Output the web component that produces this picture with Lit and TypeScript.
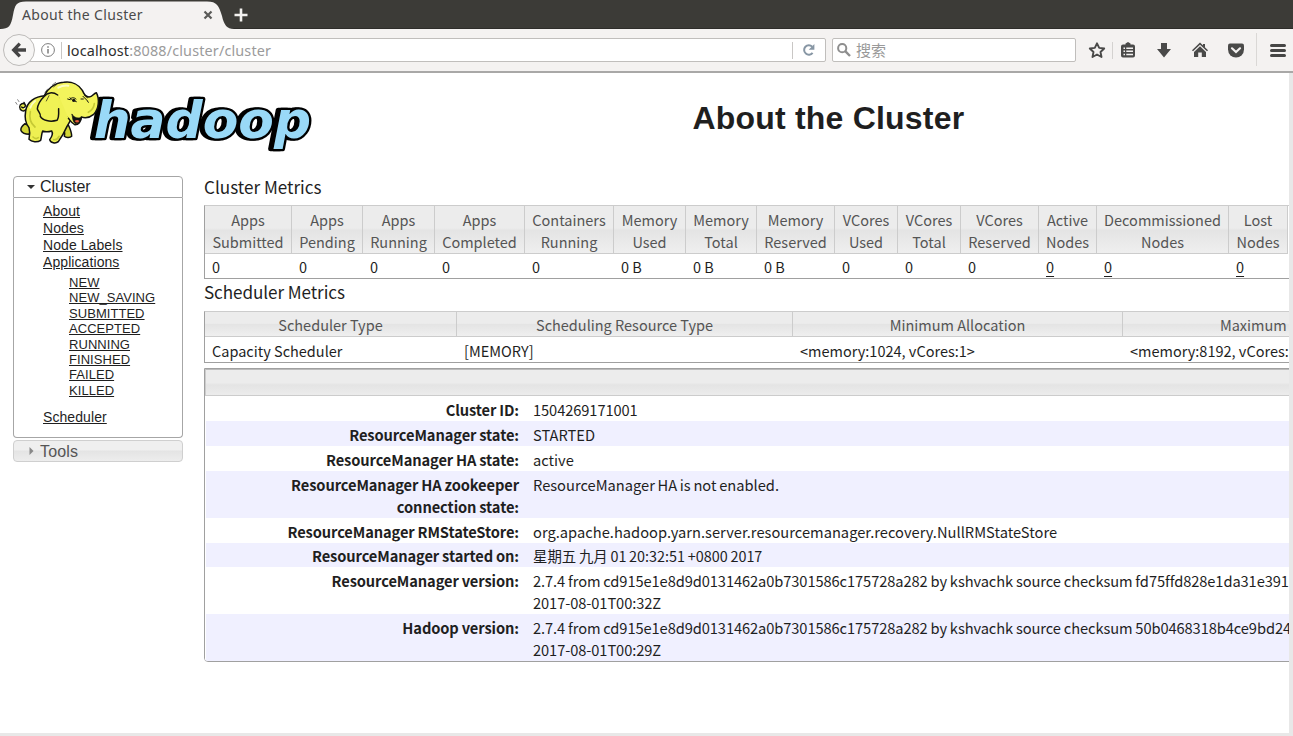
import { LitElement, html, css, svg } from "lit";
import { customElement } from "lit/decorators.js";

const METRICS: [string, string, string, boolean][] = [
  ["Apps", "Submitted", "0", false],
  ["Apps", "Pending", "0", false],
  ["Apps", "Running", "0", false],
  ["Apps", "Completed", "0", false],
  ["Containers", "Running", "0", false],
  ["Memory", "Used", "0 B", false],
  ["Memory", "Total", "0 B", false],
  ["Memory", "Reserved", "0 B", false],
  ["VCores", "Used", "0", false],
  ["VCores", "Total", "0", false],
  ["VCores", "Reserved", "0", false],
  ["Active", "Nodes", "0", true],
  ["Decommissioned", "Nodes", "0", true],
  ["Lost", "Nodes", "0", true],
];

const SCHEDULER: [string, string][] = [
  ["Scheduler Type", "Capacity Scheduler"],
  ["Scheduling Resource Type", "[MEMORY]"],
  ["Minimum Allocation", "<memory:1024, vCores:1>"],
  ["Maximum Allocation", "<memory:8192, vCores:8>"],
];

const INFO: [string[], string[], string][] = [
  [["Cluster ID:"], ["1504269171001"], "hex"],
  [["ResourceManager state:"], ["STARTED"], ""],
  [["ResourceManager HA state:"], ["active"], ""],
  [["ResourceManager HA zookeeper", "connection state:"], ["ResourceManager HA is not enabled."], "tall"],
  [["ResourceManager RMStateStore:"], ["org.apache.hadoop.yarn.server.resourcemanager.recovery.NullRMStateStore"], "path"],
  [["ResourceManager started on:"], ["星期五 九月 01 20:32:51 +0800 2017"], "short"],
  [
    ["ResourceManager version:"],
    ["2.7.4 from cd915e1e8d9d0131462a0b7301586c175728a282 by kshvachk source checksum fd75ffd828e1da31e391", "2017-08-01T00:32Z"],
    "tall hex",
  ],
  [
    ["Hadoop version:"],
    ["2.7.4 from cd915e1e8d9d0131462a0b7301586c175728a282 by kshvachk source checksum 50b0468318b4ce9bd24", "2017-08-01T00:29Z"],
    "tall hex",
  ],
];

const STATES = ["NEW", "NEW_SAVING", "SUBMITTED", "ACCEPTED", "RUNNING", "FINISHED", "FAILED", "KILLED"];

@customElement("browser-chrome")
export class BrowserChrome extends LitElement {
  static styles = css`
    :host { display: block; height: 73px; font-family: "Noto Sans", "Noto Sans CJK SC", sans-serif; }
    svg { display: block; flex: none; }
    .strip { height: 29px; background: #3c3b37; display: flex; box-shadow: inset 0 -1px #2e2d2a; }
    .tab { width: 234px; height: 29px; display: grid; }
    .tab > * { grid-area: 1 / 1; }
    .label { display: flex; align-items: center; padding: 1px 20px 0 22px; font-size: 14px; color: #4a4a4a; justify-content: space-between; }
    .title { letter-spacing: 0.34px; white-space: nowrap; }
    .plus { margin: 8px 0 0 0; }
    .bar { height: 44px; box-sizing: border-box; background: #f4f2f1; border-bottom: 2px solid #a9a8a7; display: flex; align-items: flex-start; padding: 5px 0 0 3px; }
    .back { width: 32px; height: 32px; box-sizing: border-box; border: 1px solid #bdbbb9; border-radius: 50%; background: #f6f5f4; display: grid; place-items: center; z-index: 1; flex: none; }
    .field { height: 24px; box-sizing: border-box; border: 1px solid #c0bebc; background: #fff; display: flex; align-items: center; margin-top: 4px; border-radius: 2px; flex: none; }
    .url { width: 797px; margin-left: -6px; padding-left: 11px; font-size: 14.4px; color: #9b9b9b; }
    .sep { width: 1px; height: 17px; background: #c9c7c5; flex: none; }
    .url .first { margin: 0 5px 0 6px; }
    .addr { flex: 1; letter-spacing: 0.15px; white-space: nowrap; padding-top: 1px; }
    .host { color: #2e2e2e; }
    .reload { margin: 0 9px 0 9px; }
    .search { width: 244px; margin-left: 6px; padding-left: 4px; font-size: 15px; color: #999; gap: 5px; font-family: "Noto Sans CJK SC", sans-serif; }
    .tools { display: flex; align-items: center; height: 34px; margin: -1px 0 0 12px; }
  `;
  render() {
    return html`
      <div class="strip">
        <div class="tab">
          <svg width="234" height="29" viewBox="0 0 234 29">
            <path d="M0 29C9 29 11 26 13 15 15 5 16 1.500 26 1.500H207C217 1.500 219 6 222 16 224 25 227 29 234 29Z" fill="#f4f2f1" />
          </svg>
          <div class="label">
            <span class="title">About the Cluster</span>
            <svg width="12" height="12" viewBox="0 0 12 12"><path d="M2.500 2.500 9.500 9.500M9.500 2.500 2.500 9.500" stroke="#5a5a58" stroke-width="2.200" /></svg>
          </div>
        </div>
        <svg class="plus" width="14" height="14" viewBox="0 0 14 14"><path d="M7 .500V13.500M.500 7H13.500" stroke="#f2f1ef" stroke-width="2.600" /></svg>
      </div>
      <div class="bar">
        <div class="back">
          <svg width="16" height="16" viewBox="0 0 16 16" fill="none" stroke="#454545" stroke-width="3.300"><path d="M8.800 1.700 2.700 8 8.800 14.300M2.700 8H15" /></svg>
        </div>
        <div class="field url">
          <svg width="14" height="14" viewBox="0 0 14 14" fill="none" stroke="#7d7d7d"><circle cx="7" cy="7" r="6.400" /><path d="M7 6V10.500M7 3.200V4.800" stroke-width="1.500" /></svg>
          <span class="sep first"></span>
          <span class="addr"><span class="host">localhost</span>:8088/cluster/cluster</span>
          <span class="sep"></span>
          <svg class="reload" width="14" height="14" viewBox="0 0 14 14"><path d="M10.600 9.800A4.700 4.700 0 1 1 10.200 3.700" fill="none" stroke="#8796a4" stroke-width="2" /><path d="M12.400 1V6.700H6.700Z" fill="#8796a4" /></svg>
        </div>
        <div class="field search">
          <svg width="14" height="14" viewBox="0 0 14 14" fill="none" stroke="#8e8e8e"><circle cx="5.200" cy="5.200" r="4.100" stroke-width="2" /><path d="M8.200 8.200 13 13" stroke-width="2.400" /></svg>
          <span>搜索</span>
        </div>
        <div class="tools">
          <svg width="205" height="34" viewBox="1088 33 205 34">
            <path d="M1097 43.300 1099.200 47.900 1104.200 48.500 1100.500 52 1101.500 57 1097 54.500 1092.500 57 1093.500 52 1089.800 48.500 1094.800 47.900Z" fill="none" stroke="#4a4a49" stroke-width="1.900" stroke-linejoin="round" />
            <path d="M1112.500 42V59" stroke="#d4d2d0" />
            <path d="M1123 44.500H1125.500V43.500L1128 42 1130.500 43.500V44.500H1133Q1135 44.500 1135 46.500V55.500Q1135 57.500 1133 57.500H1123Q1121 57.500 1121 55.500V46.500Q1121 44.500 1123 44.500Z" fill="#4a4a49" />
            <path d="M1123.500 48.300H1125M1126.300 48.300H1133M1123.500 51.300H1125M1126.300 51.300H1133M1123.500 54.400H1125M1126.300 54.400H1133" stroke="#f4f2f1" stroke-width="1.500" />
            <path d="M1161 43H1167V49H1171L1164 57.500 1157 49H1161Z" fill="#4a4a49" />
            <path d="M1192.500 50.700 1200 43.600 1207.500 50.700" fill="none" stroke="#4a4a49" stroke-width="1.500" />
            <path d="M1200 46.300 1206 52V57H1201.800V52.500H1198.200V57H1194V52Z M1203 44H1205V48L1203 46Z" fill="#4a4a49" />
            <path d="M1230 43.500H1242Q1244 43.500 1244 45.500V49.500A8 8 0 0 1 1228 49.500V45.500Q1228 43.500 1230 43.500Z" fill="#4a4a49" />
            <path d="M1232 48.300 1236 52 1240 48.300" fill="none" stroke="#f4f2f1" stroke-width="2.200" stroke-linecap="round" />
            <path d="M1256.500 33V66" stroke="#dad8d6" />
            <path d="M1271.500 45.500H1284.500M1271.500 50.500H1284.500M1271.500 55.500H1284.500" stroke="#464645" stroke-width="3" stroke-linecap="round" />
          </svg>
        </div>
      </div>
    `;
  }
}

const elephant = svg`
  <g stroke="#111" stroke-width="4.500" stroke-linejoin="round" stroke-linecap="round">
    <path d="M62 104C56 112 44 106 44 96 44 86 56 82 61 90 62 97 54 101 50 96M57 82 62 92" fill="#e8ea4a" stroke-width="4" />
    <path d="M60 146C52 152 46 160 48 167 53 176 63 178 72 178L80 158Z" fill="#d3d636" />
    <path d="M170 158C178 166 181 174 178 184 184 190 196 188 200 184 200 172 195 160 190 150Z" fill="#d3d636" />
    <path d="M120 62C90 64 66 80 62 108 58 130 62 146 72 158 76 172 74 184 72 193 80 202 98 202 107 196 110 186 109 177 113 168 122 172 134 170 140 168 146 178 140 186 134 194 136 204 152 207 160 200 170 186 178 172 186 154L200 130 160 62Z" fill="#eef052" />
    <path d="M118 62C126 44 146 24 176 22 202 18 222 30 232 46 238 60 244 66 252 66 264 66 264 56 274 53 284 72 282 102 266 118 254 128 240 130 229 126 229 140 220 150 209 149 199 144 194 134 190 130 174 118 164 96 160 66Z" fill="#f3f45c" />
    <path d="M118 64C126 56 150 54 162 64L190 128 170 150 110 140Z" fill="#eff154" stroke="none" />
    <path d="M201 118C207 129 222 132 230 126 228 137 222 146 211 146 203 140 203 130 201 118Z" fill="#111" stroke-width="2" />
    <path d="M209 138Q217 132 223 138 217 147 209 138" fill="#e85a3a" stroke="none" />
    <path d="M158 60C144 50 126 52 118 64 106 76 98 90 97 102 101 112 108 117 106 124 112 136 134 142 156 136 164 124 160 110 161 101" fill="#f0f255" />
    <path d="M194 74C199 67 206 66 213 72M205 76 214 80M195 68 199 73M188 72 195 74M234 64 244 74M238 60 247 68M228 72 235 72M246 76 250 82" fill="none" stroke-width="3" />
    <ellipse cx="206" cy="76" rx="5" ry="5" fill="#111" stroke="none" />
    <path d="M36 88 32 82M42 80 38 74M142 30 152 22M146 36 156 28M120 52 128 42" fill="none" stroke-width="1.500" />
    <path d="M76 110C72 128 78 146 90 156M84 186Q92 194 100 188M146 194Q156 196 162 184M250 112Q266 104 268 86" fill="none" stroke="#c5c935" stroke-width="5" />
    <path d="M160 38Q174 30 190 32M90 78Q80 86 76 98" fill="none" stroke="#fcfdc0" stroke-width="6" />
    <path d="M132 62 124 78" fill="none" stroke-width="2" />
  </g>
`;

@customElement("app-root")
export class AppRoot extends LitElement {
  static styles = css`
    :host { display: block; width: 1293px; height: 736px; overflow: hidden; background: #fff; color: #1f1f1f; font-family: "Noto Sans CJK SC", sans-serif; font-size: 14.667px; line-height: 22px; }
    a { color: inherit; text-decoration: underline; }
    .page { height: 663px; box-sizing: border-box; border-right: 4px solid #e8e8e8; border-bottom: 3px solid #e8e8e8; overflow: hidden; display: grid; grid-template-columns: 204px 1400px; grid-template-rows: 103px 1fr; }
    .banner { grid-column: 1 / -1; display: flex; width: 1289px; }
    .logo { display: block; margin: 2px 0 0 5px; flex: none; overflow: visible; }
    .wordmark { font-family: "DejaVu Sans", sans-serif; font-weight: 700; font-style: italic; font-size: 152px; fill: #99d9f7; stroke: #000; stroke-width: 14px; stroke-linejoin: round; paint-order: stroke; filter: drop-shadow(-9px 0 0 #000); }
    h1 { margin: 27px 0 0 371.500px; font: 700 32px/36px "Liberation Sans", Arial, sans-serif; letter-spacing: 0.2px; color: #1f1f1f; white-space: nowrap; }
    nav { margin-left: 13px; width: 170px; font-family: "Liberation Sans", Arial, sans-serif; }
    .head { font-size: 16px; line-height: 20px; display: flex; align-items: center; box-sizing: border-box; border: 1px solid #a6a6a6; padding-left: 12px; gap: 4px; }
    .open { height: 22px; border-radius: 4px 4px 0 0; }
    .closed { height: 22px; margin-top: 2px; border-color: #cfcfcf; border-radius: 4px; background: linear-gradient(#efefef 0 45%, #e4e4e4 50%, #ededed); color: #555; }
    .closed span { padding-top: 1px; letter-spacing: 0.15px; }
    .panel { height: 240px; box-sizing: border-box; border: 1px solid #a6a6a6; border-top: 0; border-radius: 0 0 4px 4px; padding: 5px 0 0 29px; display: flex; flex-direction: column; font-size: 14px; line-height: 17px; letter-spacing: 0.08px; }
    .sub { padding: 4px 0 11px 26px; display: flex; flex-direction: column; font-size: 13px; line-height: 15.4px; letter-spacing: 0.05px; }
    h2 { margin: 0; padding-bottom: 2px; font-weight: 400; font-size: 17.100px; line-height: 22px; white-space: nowrap; }
    main { min-width: 0; }
    .table { font-size: 14.500px; display: grid; border: 1px solid #a0a0a0; border-top-color: #ccc; box-sizing: border-box; white-space: nowrap; }
    .th { text-align: center; color: #555; border-right: 1px solid #ccc; border-bottom: 1px solid #ccc; background: linear-gradient(#ececec 0 47%, #e4e4e4 52%, #efefef); box-sizing: border-box; }
    .td { padding-left: 7px; }
    .td a { text-underline-offset: 3px; }
    .metrics { margin-top: 5px; height: 74px; width: 1200px; grid-template-columns: 87px 71px 72px 90px 89px 72px 71px 78px 63px 63px 78px 58px 132px 59px; grid-template-rows: 48px 24px; }
    .metrics .th { padding-top: 3px; }
    .metrics .td, .sched .th { padding-top: 2px; }
    .sched { margin-top: 6px; height: 52px; width: 1300px; grid-template-columns: 252px 336px 330px 333px; grid-template-rows: 25px 25px; }
    .sched .td { padding-top: 3px; }
    .second { margin-top: 2px; letter-spacing: -0.08px; }
    .info { margin-top: 5px; width: 1300px; height: 294px; box-sizing: border-box; border: 1px solid #a0a0a0; border-radius: 0 0 0 4px; overflow: hidden; }
    .bar { height: 27px; box-sizing: border-box; border: 1px solid #ccc; border-top-color: #bbb; background: linear-gradient(#ececec 0 50%, #e4e4e4 60%, #ececec); }
    .row { height: 25px; box-sizing: border-box; padding-top: 3px; display: grid; grid-template-columns: 314px 1fr; column-gap: 14px; white-space: nowrap; }
    .row:nth-child(odd) { background: #f0f0ff; box-shadow: inset 1px 0 #fff; }
    .value { word-spacing: -0.6px; }
    .path .value { letter-spacing: 0.02px; }
    .hex .value { letter-spacing: -0.085px; word-spacing: -0.3px; }
    .tall { height: 47px; }
    .short { height: 24px; padding-top: 2px; }
    .short .value { font-size: 14.400px; word-spacing: -0.5px; }
    .key { text-align: right; font-weight: 700; letter-spacing: -0.1px; word-spacing: -0.300px; }
  `;
  render() {
    return html`
      <browser-chrome></browser-chrome>
      <div class="page">
        <header class="banner">
          <svg class="logo" width="316" height="85" viewBox="0 0 948 255">
            <text class="wordmark" x="266" y="190" textLength="652" lengthAdjust="spacingAndGlyphs">hadoop</text>
            ${elephant}
          </svg>
          <h1>About the Cluster</h1>
        </header>
        <nav>
          <div class="head open">
            <svg width="10" height="10" viewBox="0 0 10 10"><path d="M1 3H9L5 7Z" fill="#333" /></svg>
            <span>Cluster</span>
          </div>
          <div class="panel">
            <span><a>About</a></span>
            <span><a>Nodes</a></span>
            <span><a>Node Labels</a></span>
            <span><a>Applications</a></span>
            <div class="sub">${STATES.map((s) => html`<span><a>${s}</a></span>`)}</div>
            <span><a>Scheduler</a></span>
          </div>
          <div class="head closed">
            <svg width="10" height="10" viewBox="0 0 10 10"><path d="M3.500 1 7.500 5 3.500 9Z" fill="#888" /></svg>
            <span>Tools</span>
          </div>
        </nav>
        <main>
          <h2>Cluster Metrics</h2>
          <div class="table metrics">
            ${METRICS.map(([a, b]) => html`<div class="th">${a}<br />${b}</div>`)}
            ${METRICS.map(([, , v, link]) => html`<div class="td">${link ? html`<a>${v}</a>` : v}</div>`)}
          </div>
          <h2 class="second">Scheduler Metrics</h2>
          <div class="table sched">
            ${SCHEDULER.map(([h]) => html`<div class="th">${h}</div>`)}
            ${SCHEDULER.map(([, v]) => html`<div class="td">${v}</div>`)}
          </div>
          <section class="info">
            <div class="bar"></div>
            ${INFO.map(
              ([k, v, size]) => html`<div class="row ${size}">
                <div class="key">${k.map((l) => html`<div>${l}</div>`)}</div>
                <div class="value">${v.map((l) => html`<div>${l}</div>`)}</div>
              </div>`
            )}
          </section>
        </main>
      </div>
    `;
  }
}
